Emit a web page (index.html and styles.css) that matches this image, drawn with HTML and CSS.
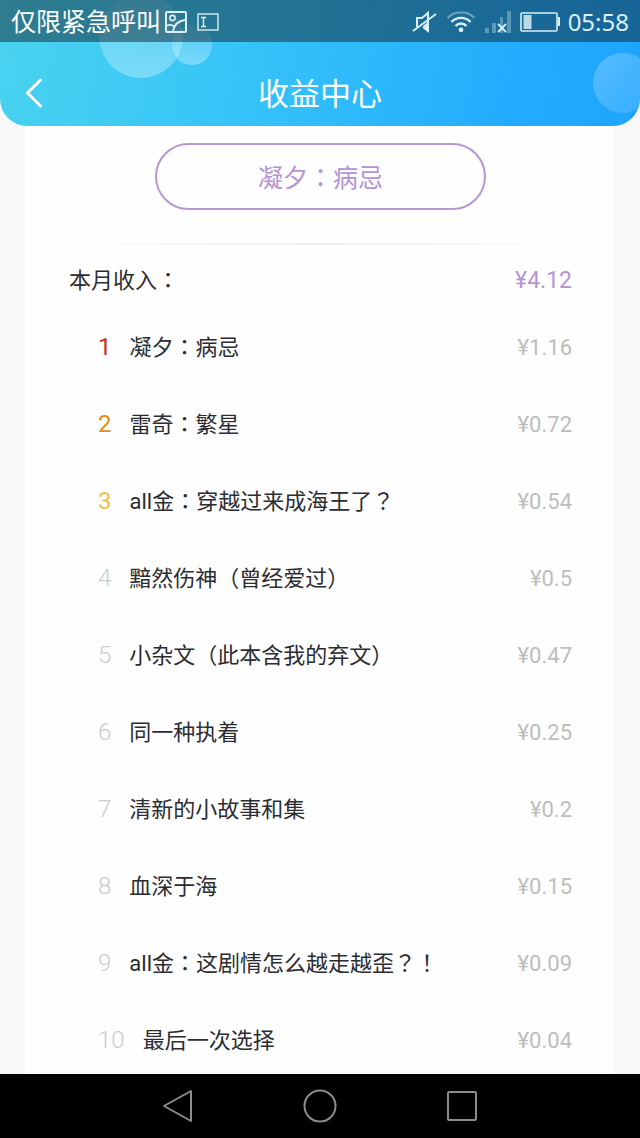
FILE: index.html
```
<!DOCTYPE html>
<html lang="zh-CN">
<head>
<meta charset="utf-8">
<meta name="viewport" content="width=device-width, initial-scale=1">
<title>收益中心</title>
<link rel="stylesheet" href="styles.css">
</head>
<body>
<header class="header">
  <div class="bubbles" aria-hidden="true">
    <span class="bubble bubble-large"></span>
    <span class="bubble bubble-small"></span>
    <span class="bubble bubble-edge"></span>
  </div>
  <div class="status">
    <span class="carrier">仅限紧急呼叫</span>
    <svg class="status-picture" width="22" height="22" viewBox="0 0 22 22" fill="none" stroke="currentColor" stroke-width="2">
      <rect x="1" y="1" width="20" height="20" rx="1"/>
      <circle cx="7.500" cy="7" r="2.600" stroke-width="1.600"/>
      <path d="M2 14.500c3-1.500 5-1 8 1.500M8 20c1-6 5-10 12-11" stroke-width="1.800"/>
    </svg>
    <svg class="status-input" width="22" height="18" viewBox="0 0 22 18" fill="none" stroke="currentColor" stroke-width="1.400">
      <rect x="1" y="1" width="20" height="16"/>
      <path d="M4 4.500h5M4 13.500h5M6.500 4.500v9"/>
    </svg>
    <div class="status-right">
      <svg width="26" height="24" viewBox="0 0 26 24" fill="none" stroke="currentColor" stroke-width="2">
        <path d="M5 17V8h5l6-5v18l-5-4"/>
        <path d="M1 21 24 4" stroke-width="1.800"/>
        <path d="M11 16 16 12v9z" fill="currentColor" stroke="none"/>
      </svg>
      <svg width="30" height="24" viewBox="0 0 30 24" fill="none" stroke="currentColor" stroke-width="2.400">
        <path d="M1.500 8c7-7.500 20-7.500 27 0" opacity=".4"/>
        <path d="M5.500 12c5-5.500 14-5.500 19 0M9.500 16c3-3.300 8-3.300 11 0"/>
        <circle cx="15" cy="19.800" r="2.400" fill="currentColor" stroke="none"/>
      </svg>
      <svg width="28" height="24" viewBox="0 0 28 24" fill="none">
        <path d="M1 18h4v5H1zM8 13h4v10H8zM16 7h3v16h-3zM23 1h4v22h-4z" fill="currentColor" opacity=".35"/>
        <path d="m14 14 8 8m0-8-8 8" stroke="currentColor" stroke-width="1.800"/>
      </svg>
      <svg width="40" height="22" viewBox="0 0 40 22" fill="none">
        <rect x="1" y="2" width="36" height="18" rx="1" stroke="currentColor" stroke-width="1.600"/>
        <path d="M38 6h2v9h-2z" fill="currentColor"/>
        <path d="M3.500 4h8v14h-8z" fill="currentColor" opacity=".85"/>
      </svg>
      <time class="clock">05:58</time>
    </div>
  </div>
  <div class="titlebar">
    <button class="back" type="button" aria-label="返回">
      <svg width="18" height="32" viewBox="0 0 18 32" fill="none" stroke="currentColor" stroke-width="3" stroke-linecap="round" stroke-linejoin="round"><path d="M15.500 3 2.500 16l13 13"/></svg>
    </button>
    <h1 class="title">收益中心</h1>
  </div>
</header>
<main class="card">
  <button class="book" type="button">凝夕<span class="punct" lang="zh-TW">：</span>病忌</button>
  <section class="income">
    <div class="total"><h2 class="total-label">本月收入<span class="punct" lang="zh-TW">：</span></h2><span class="total-value">¥4.12</span></div>
    <ol class="list">
      <li class="row"><span class="rank rank-first">1</span><span class="name">凝夕<span class="punct" lang="zh-TW">：</span>病忌</span><span class="amount">¥1.16</span></li>
      <li class="row"><span class="rank rank-second">2</span><span class="name">雷奇<span class="punct" lang="zh-TW">：</span>繁星</span><span class="amount">¥0.72</span></li>
      <li class="row"><span class="rank rank-third">3</span><span class="name">all金<span class="punct" lang="zh-TW">：</span>穿越过来成海王了<span class="punct" lang="zh-TW">？</span></span><span class="amount">¥0.54</span></li>
      <li class="row"><span class="rank">4</span><span class="name">黯然伤神<span class="punct" lang="zh-TW">（</span>曾经爱过<span class="punct" lang="zh-TW">）</span></span><span class="amount">¥0.5</span></li>
      <li class="row"><span class="rank">5</span><span class="name">小杂文<span class="punct" lang="zh-TW">（</span>此本含我的弃文<span class="punct" lang="zh-TW">）</span></span><span class="amount">¥0.47</span></li>
      <li class="row"><span class="rank">6</span><span class="name">同一种执着</span><span class="amount">¥0.25</span></li>
      <li class="row"><span class="rank">7</span><span class="name">清新的小故事和集</span><span class="amount">¥0.2</span></li>
      <li class="row"><span class="rank">8</span><span class="name">血深于海</span><span class="amount">¥0.15</span></li>
      <li class="row"><span class="rank">9</span><span class="name">all金<span class="punct" lang="zh-TW">：</span>这剧情怎么越走越歪<span class="punct" lang="zh-TW">？！</span></span><span class="amount">¥0.09</span></li>
      <li class="row"><span class="rank">10</span><span class="name">最后一次选择</span><span class="amount">¥0.04</span></li>
    </ol>
  </section>
</main>
<nav class="navbar" aria-label="系统导航">
  <button class="nav-button" type="button" aria-label="返回"><svg width="34" height="34" viewBox="0 0 34 34"><path d="M30 2v30L3 17z"/></svg></button>
  <button class="nav-button" type="button" aria-label="主页"><svg width="34" height="34" viewBox="0 0 34 34"><circle cx="17" cy="17" r="15.500"/></svg></button>
  <button class="nav-button" type="button" aria-label="最近任务"><svg width="34" height="34" viewBox="0 0 34 34"><rect x="3" y="3" width="28" height="28" rx="1"/></svg></button>
</nav>
</body>
</html>
```

FILE: styles.css
```
* {
  box-sizing: border-box;
}

body {
  display: flex;
  flex-direction: column;
  height: 100vh;
  margin: 0;
  background: #f8f8f8;
  color: #2b2d33;
  font-family: Roboto, "Noto Sans CJK SC", sans-serif;
  font-size: 22px;
}

button {
  padding: 0;
  border: 0;
  background: none;
  color: inherit;
  font: inherit;
}

svg {
  display: block;
  flex: none;
}

.punct {
  font-family: "Noto Sans CJK TC", sans-serif;
  line-height: 1;
}

.header {
  position: relative;
  flex: none;
  overflow: hidden;
  border-radius: 0 0 27px 27px;
  background: linear-gradient(100deg, #49d3ef 0%, #38c5f7 35%, #22acfe 80%, #1ea4ff 100%);
  color: #fff;
}

/* Decorative circles floating behind the header content */
.bubbles {
  position: absolute;
  inset: 0;
}

.bubble {
  position: absolute;
  border-radius: 50%;
  background: linear-gradient(rgba(255, 255, 255, 0.1), rgba(255, 255, 255, 0.32));
}

.bubble-large {
  top: -6px;
  left: 99px;
  width: 84px;
  height: 84px;
}

.bubble-small {
  top: 25px;
  left: 172px;
  width: 40px;
  height: 40px;
}

.bubble-edge {
  top: 53px;
  right: -13px;
  width: 60px;
  height: 60px;
  background: linear-gradient(135deg, rgba(255, 255, 255, 0.24), rgba(255, 255, 255, 0.1));
}

.status {
  position: relative;
  display: flex;
  align-items: center;
  height: 42px;
  padding: 2px 11px 0;
  background: rgba(16, 32, 40, 0.48);
  color: #d8f0f7;
}

.carrier {
  margin-right: 4px;
  padding-top: 2px;
  font-size: 25px;
  line-height: 36px;
  color: #fff;
}

.status-input {
  margin-left: 10px;
}

.status-right {
  display: flex;
  align-items: center;
  gap: 8px;
  margin-left: auto;
}

.clock {
  font-family: "Noto Sans", sans-serif;
  font-size: 24px;
  line-height: 36px;
}

.titlebar {
  position: relative;
  display: grid;
  grid-template-columns: 72px 1fr 72px;
  align-items: center;
  height: 84px;
  padding-top: 18px;
}

.back {
  display: flex;
  align-items: center;
  height: 48px;
  padding-left: 25px;
}

.title {
  margin: 0;
  padding-top: 4px;
  font-size: 31px;
  font-weight: 400;
  line-height: 44px;
  text-align: center;
}

.card {
  display: flex;
  flex: 1;
  flex-direction: column;
  min-height: 0;
  margin: 0 26px 0 25px;
  padding: 17px 42px 0 44px;
  overflow-y: auto;
  scrollbar-width: none;
  background: #fefefe;
}

.book {
  flex: none;
  align-self: center;
  width: 66%;
  height: 67px;
  padding-top: 4px;
  border: 2px solid #b698d3;
  border-radius: 34px;
  color: #b494d4;
  font-size: 25px;
  line-height: 58px;
}

.income {
  margin-top: 33px;
}

.income::before {
  content: "";
  display: block;
  height: 2px;
  margin: 0 10px;
  background: linear-gradient(90deg, transparent, #eee 50%, transparent);
}

.total {
  display: flex;
  align-items: baseline;
  justify-content: space-between;
  height: 64px;
  line-height: 72px;
}

.total-label {
  margin: 0;
  font-size: 22px;
  font-weight: 400;
}

.total-value {
  color: #b494d4;
  font-size: 23px;
}

.list {
  margin: 0;
  padding: 0 0 0 29px;
  list-style: none;
}

.row {
  display: flex;
  align-items: baseline;
  height: 77px;
  line-height: 77px;
}

.rank {
  margin-right: 18px;
  color: #c9cdcd;
  font-size: 24px;
  font-weight: 300;
}

.rank-first {
  color: #c83218;
  font-weight: 400;
}

.rank-second {
  color: #e88a16;
  font-weight: 400;
}

.rank-third {
  color: #f0c04c;
  font-weight: 400;
}

.amount {
  margin-left: auto;
  color: #bbbebc;
}

.navbar {
  display: flex;
  flex: none;
  align-items: center;
  justify-content: center;
  height: 64px;
  background: #000;
}

.nav-button {
  display: flex;
  align-items: center;
  justify-content: center;
  width: 142px;
  height: 64px;
}

.nav-button svg {
  fill: none;
  stroke: #8c8c8c;
  stroke-width: 2;
  stroke-linejoin: round;
}
```
